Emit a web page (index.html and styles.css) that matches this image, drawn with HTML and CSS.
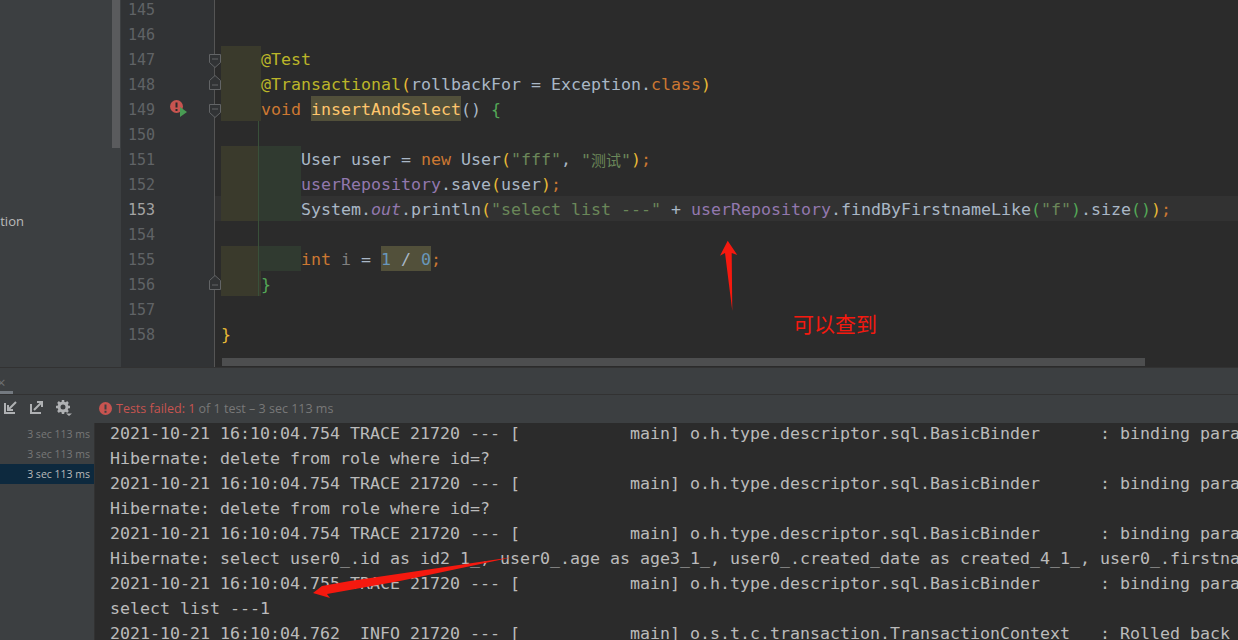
FILE: index.html
```html
<!DOCTYPE html>
<html lang="en">
<head>
<meta charset="utf-8">
<title>Test run</title>
<link rel="stylesheet" href="styles.css">
</head>
<body>
<div class="top">
  <aside class="project"><span class="project-label">ation</span></aside>
  <div class="vscroll"><div class="vthumb"></div></div>
  <main class="editor">
    <div class="rows">
      <div class="row"><div class="gut">145</div><div class="code"></div></div>
      <div class="row"><div class="gut">146</div><div class="code"></div></div>
      <div class="row"><div class="gut">147<svg class="fold" width="14" height="16" viewBox="0 0 14 16"><path d="M1.500 1.500h11v8L7 14.500 1.500 9.500z M4 6h6"/></svg></div><div class="code"><span class="ol w40"></span><span class="ann">@Test</span></div></div>
      <div class="row"><div class="gut">148<svg class="fold fold-end" width="14" height="17" viewBox="0 0 14 17"><path d="M7 1.500 12.500 6.500v9h-11v-9z M4 11h6"/></svg></div><div class="code"><span class="ol w40"></span><span class="ann">@Transactional</span><span class="br">(</span><span class="txt">rollbackFor = Exception.</span><span class="kw">class</span><span class="br">)</span></div></div>
      <div class="row"><div class="gut">149<svg class="run" width="18" height="18" viewBox="0 0 18 18"><circle cx="6.500" cy="6.500" r="6.500" fill="#c75450"/><path d="M5.500 2.500h2v5h-2zM5.500 9h2v2h-2z" fill="#2b2b2b"/><path d="M10 7 17 12 10 17z" fill="#499c54"/></svg><svg class="fold" width="14" height="16" viewBox="0 0 14 16"><path d="M1.500 1.500h11v8L7 14.500 1.500 9.500z M4 6h6"/></svg></div><div class="code"><span class="ol w40"></span><span class="kw">void</span><span class="txt"> </span><span class="hl-name">insertAndSelect</span><span class="txt">() </span><span class="br-g">{</span></div></div>
      <div class="row"><div class="gut">150</div><div class="code"></div></div>
      <div class="row"><div class="gut">151</div><div class="code"><span class="ol w37"></span><span class="gr w43"></span><span class="txt">User user = </span><span class="kw">new</span><span class="txt"> User</span><span class="br">(</span><span class="str">"fff"</span><span class="txt">, </span><span class="str">"<span class="cjk">测试</span>"</span><span class="br">)</span><span class="kw">;</span></div></div>
      <div class="row"><div class="gut">152</div><div class="code"><span class="ol w37"></span><span class="gr w43"></span><span class="fld">userRepository</span><span class="txt">.save</span><span class="br">(</span><span class="txt">user</span><span class="br">)</span><span class="kw">;</span></div></div>
      <div class="row current"><div class="gut">153</div><div class="code"><span class="ol w37"></span><span class="gr w43"></span><span class="txt">System.</span><span class="fld it">out</span><span class="txt">.println</span><span class="br">(</span><span class="str">"select list ---"</span><span class="txt"> + </span><span class="fld">userRepository</span><span class="txt">.findByFirstnameLike</span><span class="br-g">(</span><span class="str">"f"</span><span class="br-g">)</span><span class="txt">.size</span><span class="br-g">()</span><span class="br">)</span><span class="kw">;</span></div></div>
      <div class="row"><div class="gut">154</div><div class="code"></div></div>
      <div class="row"><div class="gut">155</div><div class="code"><span class="ol w37"></span><span class="gr w43"></span><span class="kw">int</span><span class="txt"> </span><span class="var">i</span><span class="txt"> = </span><span class="hl-expr"><span class="num">1</span> / <span class="num">0</span></span><span class="kw">;</span></div></div>
      <div class="row"><div class="gut">156<svg class="fold fold-end" width="14" height="17" viewBox="0 0 14 17"><path d="M7 1.500 12.500 6.500v9h-11v-9z M4 11h6"/></svg></div><div class="code"><span class="ol w40"></span><span class="br-g">}</span></div></div>
      <div class="row"><div class="gut">157</div><div class="code"></div></div>
      <div class="row"><div class="gut">158</div><div class="code"><span class="br">}</span></div></div>
      <div class="row"><div class="gut"></div><div class="code"></div></div>
    </div>
    <div class="guide"></div>
    <div class="hscroll"></div>
  </main>
</div>
<div class="tabs"><span class="tab-close">×</span><span class="tab-mark"></span></div>
<div class="toolbar">
  <svg class="tool" width="16" height="16" viewBox="0 0 16 16"><path d="M3 3v10h10M14 2 6 10M6 5v5h5" fill="none" stroke="#afb1b3" stroke-width="2"/></svg>
  <svg class="tool" width="16" height="16" viewBox="0 0 16 16"><path d="M3 4v9h10M14 2 6 10M9 2h5v5" fill="none" stroke="#afb1b3" stroke-width="2"/></svg>
  <svg class="tool gear" width="16" height="16" viewBox="0 0 16 16"><circle cx="7" cy="7" r="4" fill="none" stroke="#afb1b3" stroke-width="3"/><path d="M7 0v3M7 11v3M0 7h3M11 7h3M2 2l2 2M10 10l2 2M12 2l-2 2M4 10l-2 2" stroke="#afb1b3" stroke-width="2.500"/><path d="M10 13.500h6l-3 2.500z" fill="#afb1b3"/></svg>
  <div class="status">
    <svg width="13" height="13" viewBox="0 0 13 13"><circle cx="6.500" cy="6.500" r="6.500" fill="#c75450"/><path d="M5.500 2.500h2v5h-2zM5.500 8.800h2v2h-2z" fill="#3c3f41"/></svg>
    <span><span class="failed">Tests failed: 1</span> of 1 test – 3 sec 113 ms</span>
  </div>
</div>
<div class="bottom">
  <div class="tree">
    <div class="tree-row">3 sec 113 ms</div>
    <div class="tree-row">3 sec 113 ms</div>
    <div class="tree-row selected">3 sec 113 ms</div>
  </div>
  <pre class="console">2021-10-21 16:10:04.754 TRACE 21720 --- [           main] o.h.type.descriptor.sql.BasicBinder      : binding parameter
Hibernate: delete from role where id=?
2021-10-21 16:10:04.754 TRACE 21720 --- [           main] o.h.type.descriptor.sql.BasicBinder      : binding parameter
Hibernate: delete from role where id=?
2021-10-21 16:10:04.754 TRACE 21720 --- [           main] o.h.type.descriptor.sql.BasicBinder      : binding parameter
Hibernate: select user0_.id as id2_1_, user0_.age as age3_1_, user0_.created_date as created_4_1_, user0_.firstname
2021-10-21 16:10:04.755 TRACE 21720 --- [           main] o.h.type.descriptor.sql.BasicBinder      : binding parameter
select list ---1
2021-10-21 16:10:04.762  INFO 21720 --- [           main] o.s.t.c.transaction.TransactionContext   : Rolled back transaction</pre>
</div>
<svg class="mark mark-up" width="20" height="72" viewBox="0 0 20 72"><path d="M7.700 .7 17.300 15 11.700 13 12.300 71 5 13 0 15.700z" fill="#f5190f"/></svg>
<svg class="mark mark-left" width="201" height="44" viewBox="0 0 201 44"><path d="M200 1 37 25 9 30 0 37 17 42 14 38 87 25z" fill="#f5190f"/></svg>
<span class="note">可以查到</span>
</body>
</html>
```
FILE: styles.css
```css
html, body { margin: 0; padding: 0; }
body {
  width: 1238px;
  height: 640px;
  overflow: hidden;
  position: relative;
  background: #2b2b2b;
  font-family: "DejaVu Sans Mono", "Liberation Mono", monospace;
}
.top { display: flex; height: 367px; overflow: hidden; }
.project { width: 112px; flex: none; background: #3c3f41; display: flex; flex-direction: column; padding-top: 213px; box-sizing: border-box; overflow: hidden; }
.project-label { font: 13px/16px "Open Sans", sans-serif; color: #bbbbbb; margin-left: -7px; }
.vscroll { width: 9px; background: #3c3f41; flex: none; }
.vthumb { width: 8px; height: 148px; background: #5a5b5d; }
.editor { flex: 1; position: relative; overflow: hidden; }
.rows { margin-top: -4px; }
.row { display: flex; height: 25px; font-size: 16.61px; white-space: pre; }
.gut { position: relative; width: 94px; height: 25px; flex: none; box-sizing: border-box; padding-left: 7px; background: #313335; border-right: 1px solid #555555; color: #606366; font-size: 15px; line-height: 29px; }
.code { flex: 1; height: 25px; padding-left: 6px; display: flex; line-height: 27px; }
.current .code { background: #323232; }
.current .gut { color: #a4a3a3; }
.fold { position: absolute; left: 87px; top: 7px; fill: #313335; stroke: #626466; stroke-width: 1; }
.fold-end { top: 3px; }
.run { position: absolute; left: 49px; top: 4px; }
.ol { background: #3a3a2c; flex: none; }
.gr { background: #303a30; flex: none; }
.w40 { width: 40px; }
.w37 { width: 37px; }
.w43 { width: 43px; }
.txt { color: #a9b7c6; }
.kw { color: #cc7832; }
.ann { color: #bbb529; }
.br { color: #e8ba36; }
.br-g { color: #54a857; }
.str { color: #6a8759; }
.cjk { font-family: "Noto Sans CJK SC", sans-serif; font-size: 15px; }
.fld { color: #9278ae; }
.it { font-style: italic; }
.var { color: #808080; }
.num { color: #6897bb; }
.hl-name { background: #52503a; color: #ffc66d; }
.hl-expr { background: #52503a; color: #a9b7c6; }
.guide { position: absolute; left: 137px; top: 121px; width: 1px; height: 175px; background: #39503a; }
.hscroll { position: absolute; left: 101px; top: 358px; width: 923px; height: 8px; background: #4d4e4f; }
.tabs { height: 26px; background: #3c3f41; border-top: 1px solid #323232; border-bottom: 1px solid #323232; position: relative; overflow: hidden; }
.tab-close { position: absolute; left: -3px; top: 4px; font: 15px "Open Sans", sans-serif; color: #6e7072; }
.tab-mark { position: absolute; left: 0; bottom: 0; width: 13px; height: 3px; background: #747a80; }
.toolbar { height: 28px; background: #3c3f41; display: flex; align-items: center; padding: 0 0 2px 2px; gap: 10px; box-sizing: border-box; }
.tool { flex: none; }
.gear { margin-left: 2px; }
.status { display: flex; align-items: center; gap: 4px; margin-left: 17px; font: 12.500px "Open Sans", sans-serif; color: #787878; }
.failed { color: #c75450; }
.bottom { display: flex; height: 217px; }
.tree { width: 94px; flex: none; background: #3c3f41; border-right: 1px solid #323232; padding-top: 1px; }
.tree-row { height: 20px; text-align: right; padding-right: 4px; font: 10.500px/20px "Open Sans", sans-serif; color: #787878; }
.selected { background: #0d293e; color: #bbbbbb; }
.console { flex: 1; margin: -2px 0 0; padding-left: 15px; overflow: hidden; font: 16.61px/25px "DejaVu Sans Mono", monospace; color: #bbbbbb; white-space: pre; }
.mark { position: absolute; }
.mark-up { left: 720px; top: 240px; }
.mark-left { left: 313px; top: 556px; }
.note { position: absolute; left: 793px; top: 311px; font: 21px/25px "Noto Sans CJK SC", sans-serif; color: #f5190f; }
```
